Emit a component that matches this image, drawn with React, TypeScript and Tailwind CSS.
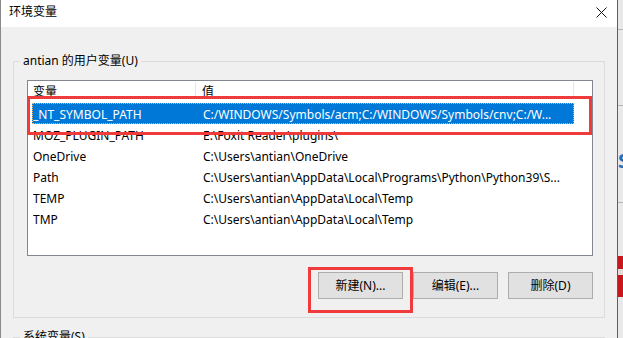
const rows = [
  { name: "_NT_SYMBOL_PATH", value: "C:/WINDOWS/Symbols/acm;C:/WINDOWS/Symbols/cnv;C:/W...", selected: true },
  { name: "MOZ_PLUGIN_PATH", value: "E:\\Foxit Reader\\plugins\\" },
  { name: "OneDrive", value: "C:\\Users\\antian\\OneDrive" },
  { name: "Path", value: "C:\\Users\\antian\\AppData\\Local\\Programs\\Python\\Python39\\S..." },
  { name: "TEMP", value: "C:\\Users\\antian\\AppData\\Local\\Temp" },
  { name: "TMP", value: "C:\\Users\\antian\\AppData\\Local\\Temp" },
];

function WinButton({ label }: { label: string }) {
  return (
    <button className="w-[85px] h-[27px] bg-[#e1e1e1] border border-[#adadad] text-[12px] leading-[16px] text-black flex items-center justify-center">
      {label}
    </button>
  );
}

export default function App() {
  return (
    <div className="w-[623px] h-[338px] overflow-hidden flex bg-[#ececec] font-['Noto_Sans','Noto_Sans_CJK_SC',sans-serif] text-[12px] text-black">
      {/* dialog */}
      <div className="w-[618px] shrink-0 h-full flex flex-col border-l border-l-[#8a8a8a] border-r border-r-[#5f5f5f] bg-[#f0f0f0]">
        {/* title bar */}
        <div className="h-[27px] shrink-0 bg-white flex items-center justify-between pl-[8px] pr-[10px]">
          <span className="text-[12px] leading-[16px] -mt-[3px]">环境变量</span>
          <svg width="11" height="11" viewBox="0 0 11 11" className="-mt-[3px]">
            <path d="M0.5 0.5 L10.5 10.5 M10.5 0.5 L0.5 10.5" stroke="#111" strokeWidth="1" fill="none" />
          </svg>
        </div>

        {/* body */}
        <div className="flex-1 px-[12px]">
          {/* user vars group */}
          <div className="relative mt-[34px] h-[257px] border border-[#dcdcdc] pt-[18px] pl-[13px] pr-[11px] flex flex-col">
            <span className="absolute -top-[9px] left-[6px] px-[3px] bg-[#f0f0f0] leading-[16px]">antian 的用户变量(U)</span>

            {/* list */}
            <div className="relative h-[176px] border border-[#828790] bg-white">
              {/* header */}
              <div className="flex h-[22px] ml-[4px]">
                <div className="w-[163px] pt-[3px] pl-[1px] leading-[16px]">变量</div>
                <div className="w-px h-[15px] mt-[1px] bg-[#e5e5e5]" />
                <div className="w-[377px] pt-[3px] pl-[6px] leading-[16px]">值</div>
                <div className="w-px h-[15px] mt-[1px] bg-[#e5e5e5]" />
              </div>

              {rows.map((r) => (
                <div
                  key={r.name}
                  className={
                    r.selected
                      ? "flex h-[21px] ml-[4px] w-[542px] bg-[#0078d7] text-white border border-dotted border-[#f2b66a]"
                      : "flex h-[21px] ml-[4px] w-[542px] border border-transparent"
                  }
                >
                  <div className="w-[170px] pt-[3px] leading-[16px] whitespace-nowrap overflow-hidden">{r.name}</div>
                  <div className="flex-1 pt-[3px] leading-[16px] whitespace-nowrap overflow-hidden">{r.value}</div>
                </div>
              ))}

              {/* annotation */}
              <div className="absolute -left-px top-[15px] w-[565px] h-[39px] border-[3px] border-[#ef3b3b]" />
            </div>

            {/* buttons */}
            <div className="mt-[16px] flex justify-end gap-[10px]">
              <div className="relative">
                <WinButton label="新建(N)..." />
                <div className="absolute -left-[10px] -top-[5px] w-[105px] h-[46px] border-[3px] border-[#ef3b3b]" />
              </div>
              <WinButton label="编辑(E)..." />
              <WinButton label="删除(D)" />
            </div>
          </div>

          {/* system vars group */}
          <div className="relative mt-[19px] h-[100px] border border-[#dcdcdc]">
            <span className="absolute -top-[9px] left-[6px] px-[3px] bg-[#f0f0f0] leading-[16px]">系统变量(S)</span>
          </div>
        </div>
      </div>

      {/* window behind */}
      <div className="flex-1 min-w-0 overflow-hidden h-full flex flex-col bg-[#e9e9e9]">
        <div className="h-[30px] shrink-0 border-b border-[#b5b5b5]" />
        <div className="h-[76px] shrink-0 border-b border-[#b5b5b5]" />
        <div className="mt-[45px] h-[19px] shrink-0 flex items-center">
          <span className="text-[20px] leading-[19px] text-[#1f6fbf] font-bold">S</span>
        </div>
        <div className="mt-[32px] h-[54px] shrink-0 border-t border-[#b5b5b5]" />
        <div className="h-[13px] shrink-0 bg-[#c8161d]" />
        <div className="h-[6px] shrink-0 bg-[#e9d6d6]" />
        <div className="h-[22px] shrink-0 bg-[#c8161d]" />
      </div>
    </div>
  );
}
